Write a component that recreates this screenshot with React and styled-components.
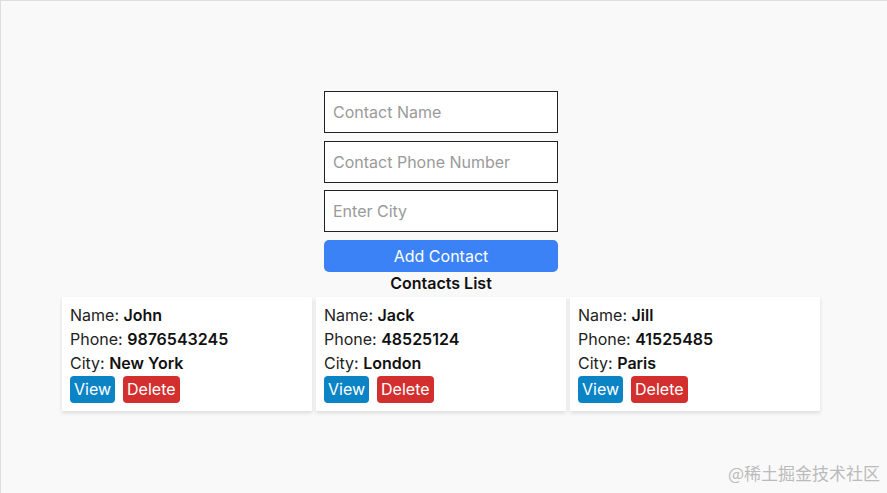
import styled, { createGlobalStyle } from "styled-components";

const GlobalStyle = createGlobalStyle`
  html, body {
    margin: 0;
    padding: 0;
    background: #f9f9f9;
  }
  body {
    font-family: Inter, "Noto Sans", sans-serif;
  }
`;

const Page = styled.div`
  box-sizing: border-box;
  width: 887px;
  height: 493px;
  border-top: 1px solid #dedede;
  border-left: 1px solid #dedede;
  position: relative;
  display: flex;
  flex-direction: column;
  align-items: center;
  padding-top: 90px;
`;

const Form = styled.form`
  display: flex;
  flex-direction: column;
  gap: 7.5px;
  width: 234px;
  margin-left: -6px;
`;

const Input = styled.input`
  box-sizing: border-box;
  height: 42px;
  border: 1px solid #222;
  background: #fff;
  padding: 0 8px;
  font-family: Inter, sans-serif;
  font-size: 16px;
  color: #222;
  outline: none;
  &::placeholder {
    color: #9a9a9a;
  }
`;

const AddButton = styled.button`
  height: 32px;
  border: none;
  border-radius: 5px;
  background: #3b82f6;
  color: #fff;
  font-family: Inter, sans-serif;
  font-size: 16px;
`;

const Heading = styled.h2`
  margin: 1px 0 4px;
  font-size: 16px;
  font-weight: 600;
  color: #111;
  line-height: 20px;
  margin-left: -6px;
`;

const CardRow = styled.div`
  display: flex;
  gap: 4px;
  margin-left: -6px;
`;

const Card = styled.div`
  box-sizing: border-box;
  width: 250px;
  height: 114px;
  background: #fff;
  padding: 6px 8px;
  box-shadow: 0 2px 4px rgba(0, 0, 0, 0.12);
  font-size: 16px;
  color: #222;
`;

const Line = styled.div`
  line-height: 24px;
  b {
    font-weight: 600;
    color: #111;
  }
`;

const Actions = styled.div`
  display: flex;
  gap: 8px;
  margin-top: 1px;
`;

const ActionButton = styled.button`
  height: 27px;
  padding: 0 4px;
  border: none;
  border-radius: 4px;
  background: ${(p) => (p.$danger ? "#d32f2f" : "#0b84c6")};
  color: #fff;
  font-family: Inter, sans-serif;
  font-size: 16px;
`;

const Watermark = styled.div`
  position: absolute;
  right: 7px;
  bottom: 8px;
  font-family: "Noto Sans CJK SC", sans-serif;
  font-size: 17px;
  color: #bbbbbb;
`;

const contacts = [
  { name: "John", phone: "9876543245", city: "New York" },
  { name: "Jack", phone: "48525124", city: "London" },
  { name: "Jill", phone: "41525485", city: "Paris" },
];

export default function App() {
  return (
    <>
      <GlobalStyle />
      <Page>
        <Form onSubmit={(e) => e.preventDefault()}>
          <Input placeholder="Contact Name" />
          <Input placeholder="Contact Phone Number" />
          <Input placeholder="Enter City" />
          <AddButton type="submit">Add Contact</AddButton>
        </Form>
        <Heading>Contacts List</Heading>
        <CardRow>
          {contacts.map((c) => (
            <Card key={c.name}>
              <Line>Name: <b>{c.name}</b></Line>
              <Line>Phone: <b>{c.phone}</b></Line>
              <Line>City: <b>{c.city}</b></Line>
              <Actions>
                <ActionButton>View</ActionButton>
                <ActionButton $danger>Delete</ActionButton>
              </Actions>
            </Card>
          ))}
        </CardRow>
        <Watermark>@稀土掘金技术社区</Watermark>
      </Page>
    </>
  );
}
